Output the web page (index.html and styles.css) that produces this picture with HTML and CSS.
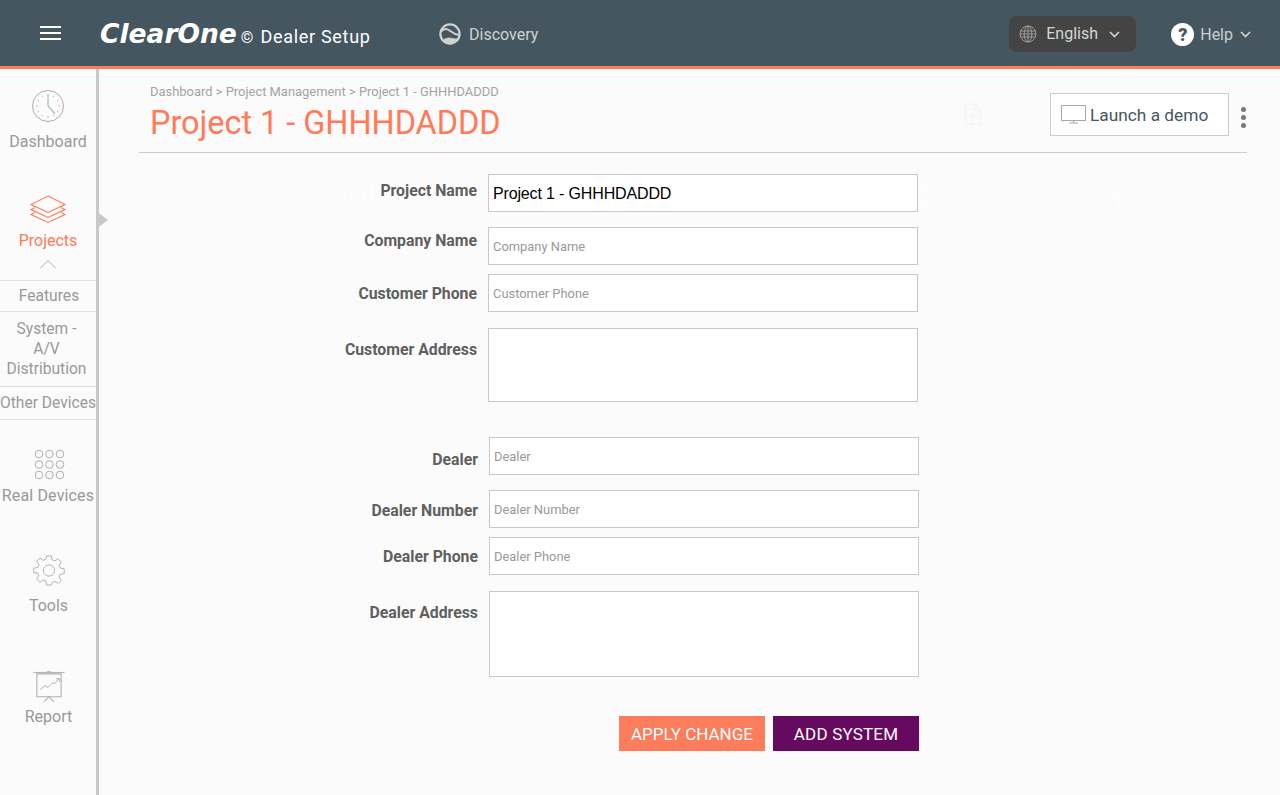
FILE: index.html
```html
<!DOCTYPE html>
<html lang="en">
<head>
<meta charset="utf-8">
<title>ClearOne Dealer Setup</title>
<link rel="stylesheet" href="styles.css">
</head>
<body>
<header class="topbar">
  <button class="burger" aria-label="Menu"><span></span><span></span><span></span></button>
  <div class="brand">
    <span class="brand-logo">ClearOne</span><span class="brand-copy">©</span><span class="brand-name">Dealer Setup</span>
  </div>
  <div class="discovery">
    <svg width="24" height="24" viewBox="0 0 24 24" fill="none" stroke="#cfd2d3" stroke-width="2.2"><circle cx="12" cy="12" r="9.600"/><path d="M2.500 10c3-3.500 6.500-3.500 9-1.500s5 4 10 4.500" stroke-width="1.800"/><path d="M4.500 19c2.500-2.500 5-3.200 8-2.800s5 1.200 7 .8l-2 3-5 2-5-.8z" fill="#cfd2d3" stroke-width="1"/></svg>
    <span>Discovery</span>
  </div>
  <div class="spacer"></div>
  <div class="lang">
    <svg width="18" height="18" viewBox="0 0 18 18" fill="none" stroke="#9a9a9a" stroke-width="1"><circle cx="9" cy="9" r="8"/><ellipse cx="9" cy="9" rx="3.800" ry="8"/><path d="M9 1v16M1.500 6h15M1.500 12h15M1 9h16"/></svg>
    <span>English</span>
    <svg class="chev" width="11" height="7" viewBox="0 0 11 7" fill="none" stroke="#d5d5d5" stroke-width="1.600"><path d="M1 1l4.500 4.500L10 1"/></svg>
  </div>
  <div class="help">
    <span class="help-mark">?</span>
    <span class="help-text">Help</span>
    <svg width="11" height="7" viewBox="0 0 11 7" fill="none" stroke="#d5d5d5" stroke-width="1.600"><path d="M1 1l4.500 4.500L10 1"/></svg>
  </div>
</header>
<div class="page">
  <nav class="side">
    <a class="nav nav-dash">
      <svg width="34" height="34" viewBox="0 0 34 34" fill="none" stroke="#aeaeae"><circle cx="17" cy="17" r="15.500"/><path d="M17 5v12l7 8" stroke="#a9bccb" stroke-width="1.200"/><path d="M17 29v-2M5 17h2M29 17h-2M11 6.600l.8 1.400M23 6.600l-.8 1.400M6.600 11l1.400.8M27.400 11l-1.400.8M6.600 23l1.400-.8M27.400 23l-1.400-.8M11 27.400l.8-1.400M23 27.400l-.8-1.400" stroke="#bbb"/></svg>
      <span>Dashboard</span>
    </a>
    <a class="nav nav-projects">
      <svg width="36" height="29" viewBox="0 0 36 29" fill="none" stroke="#ff7a59" stroke-width="1.100"><path d="M18 1L35 9.500 18 17.500 1 9.500z"/><path d="M5 12.500L1 14.500l17 8 17-8-4-2"/><path d="M5 17.500L1 19.500l17 8 17-8-4-2"/></svg>
      <span>Projects</span>
      <svg class="caret" width="18" height="10" viewBox="0 0 18 10" fill="none" stroke="#a9b4b8"><path d="M1 9.500L9 1.500l8 8"/></svg>
    </a>
    <ul class="sub">
      <li class="sub-features">Features</li>
      <li class="sub-system">System -<br>A/V<br>Distribution</li>
      <li class="sub-other">Other Devices</li>
    </ul>
    <a class="nav nav-real">
      <svg class="real-icon" width="31" height="31" viewBox="0 0 31 31" fill="none" stroke="#aeaeae"><circle cx="5" cy="5" r="3.800"/><circle cx="15.500" cy="5" r="3.800"/><circle cx="26" cy="5" r="3.800"/><circle cx="5" cy="15.500" r="3.800"/><circle cx="15.500" cy="15.500" r="3.800"/><circle cx="26" cy="15.500" r="3.800"/><circle cx="5" cy="26" r="3.800"/><circle cx="15.500" cy="26" r="3.800"/><circle cx="26" cy="26" r="3.800"/></svg>
      <span>Real Devices</span>
    </a>
    <a class="nav nav-tools">
      <svg width="32" height="31" viewBox="0 0 33 33" fill="none" stroke="#aeaeae"><circle cx="16.500" cy="16.500" r="6"/><path d="M14 1h5l.8 4.200 2.900 1.200 3.500-2.400 3.500 3.500-2.400 3.500 1.200 2.900 4.200.8v5l-4.200.8-1.200 2.900 2.400 3.500-3.500 3.500-3.500-2.400-2.900 1.200L19 32h-5l-.8-4.200-2.900-1.200-3.500 2.400-3.500-3.500 2.400-3.500-1.200-2.900L.300 19v-5l4.200-.8 1.200-2.900-2.400-3.500 3.500-3.500 3.500 2.400 2.900-1.200z"/></svg>
      <span>Tools</span>
    </a>
    <a class="nav nav-report">
      <svg width="32" height="31" viewBox="0 0 32 32" fill="none" stroke="#aeaeae"><path d="M0 1.500h32M13.500 1c.5-1 4.500-1 5 0"/><path d="M3.500 3h25v23.500h-25z" stroke-width="1.100"/><path d="M7 19l5-4 3 2 5-5 2 1 4-5M23.500 8H27v3.500" stroke-width="1"/><path d="M11 31.500l5-5 5 5" stroke-width="1.100"/></svg>
      <span>Report</span>
    </a>
    <span class="side-arrow"></span>
  </nav>
  <main class="main">
    <div class="head">
      <div class="head-text">
        <div class="crumbs">Dashboard &gt; Project Management &gt; Project 1 - GHHHDADDD</div>
        <h1 class="title">Project 1 - GHHHDADDD</h1>
      </div>
      <svg class="ghost ghost-upload" width="18" height="24" viewBox="0 0 18 24" fill="none" stroke="#f3f3f3"><path d="M1 1h10l6 6v14H1zM11 1v6h6M9 23V10M5 14l4-4 4 4"/></svg>
      <button class="demo">
        <svg width="25" height="19" viewBox="0 0 25 19" fill="none" stroke="#a8a8a8"><rect x=".5" y=".5" width="24" height="15"/><path d="M8 18h9M12.500 16v2"/></svg>
        <span>Launch a demo</span>
      </button>
      <span class="dots"><i></i><i></i><i></i></span>
    </div>
    <form class="form">
      <svg class="ghost ghost-map" width="30" height="24" viewBox="0 0 30 24" fill="none" stroke="#fff"><path d="M1 6l8-4 12 2 8-3v18l-8 3-12-3-8 3zM9 2v17M21 4v19"/></svg>
      <svg class="ghost ghost-doc" width="10" height="26" viewBox="0 0 10 26" fill="none" stroke="#fff"><path d="M0 1h9v24H0M2 8h5M2 13h5M2 18h5"/></svg>
      <svg class="ghost ghost-lock" width="20" height="24" viewBox="0 0 20 24" fill="none" stroke="#fff"><rect x="1" y="10" width="18" height="13"/><path d="M4 10V6c0-6 12-6 12 0v4M10 14v4"/></svg>
      <div class="group">
        <div class="row row-name">
          <label class="lbl lbl-a">Project Name</label>
          <input class="field field-value" value="Project 1 - GHHHDADDD">
        </div>
        <div class="row row-company">
          <label class="lbl lbl-b">Company Name</label>
          <input class="field" placeholder="Company Name">
        </div>
        <div class="row row-phone">
          <label class="lbl lbl-c">Customer Phone</label>
          <input class="field" placeholder="Customer Phone">
        </div>
        <div class="row row-addr">
          <label class="lbl lbl-d">Customer Address</label>
          <textarea class="field area-a"></textarea>
        </div>
      </div>
      <div class="group group-dealer">
        <div class="row">
          <label class="lbl lbl-e">Dealer</label>
          <input class="field" placeholder="Dealer">
        </div>
        <div class="row row-dnum">
          <label class="lbl lbl-f">Dealer Number</label>
          <input class="field" placeholder="Dealer Number">
        </div>
        <div class="row row-dphone">
          <label class="lbl lbl-c">Dealer Phone</label>
          <input class="field" placeholder="Dealer Phone">
        </div>
        <div class="row row-daddr">
          <label class="lbl lbl-d">Dealer Address</label>
          <textarea class="field area-b"></textarea>
        </div>
        <div class="actions">
          <button type="button" class="btn btn-apply">APPLY CHANGE</button>
          <button type="button" class="btn btn-add">ADD SYSTEM</button>
        </div>
      </div>
    </form>
  </main>
</div>
</body>
</html>
```
FILE: styles.css
```css
* { box-sizing: border-box; }
html, body { margin: 0; height: 795px; overflow: hidden; }
body { font-family: Roboto, "Liberation Sans", sans-serif; background: #fbfbfb; color: #555; }

.topbar { height: 69px; background: #465661; border-bottom: 3px solid #ff7a59; display: flex; align-items: center; }
.burger { width: 21px; height: 14px; margin-left: 40px; padding: 0; border: 0; background: none; display: flex; flex-direction: column; justify-content: space-between; }
.burger span { display: block; height: 2px; background: #fff; }
.brand { align-self: flex-start; width: 300px; margin: 2px 0 0 39px; padding-top: 10px; display: flex; align-items: baseline; color: #fff; white-space: nowrap; line-height: 43px; }
.brand-logo { font-family: "DejaVu Sans", sans-serif; font-weight: 700; font-style: italic; font-size: 26.500px; }
.brand-copy { font-size: 16px; margin-left: 4px; }
.brand-name { font-size: 18px; margin-left: 7px; letter-spacing: .7px; }
.discovery { margin: 2px 0 0 38px; display: flex; align-items: center; gap: 7px; color: #cfd2d3; font-size: 16px; }
.spacer { flex: 1; }
.lang { width: 127px; height: 36px; background: #444; border-radius: 8px; display: flex; align-items: center; padding-left: 10px; color: #d5d5d5; font-size: 16px; margin-top: 2px; }
.lang span { margin: -2px 0 0 9px; }
.lang .chev { margin-left: 11px; }
.help { margin: 2px 29px 0 35px; display: flex; align-items: center; color: #c9cdd0; font-size: 16px; }
.help-mark { width: 23px; height: 23px; border-radius: 50%; background: #fff; color: #465661; font-weight: 900; font-size: 18px; line-height: 23px; text-align: center; margin-right: 6px; }
.help-text { margin-right: 7px; }

.page { display: flex; height: 726px; }
.side { position: relative; width: 99px; flex: none; border-right: 3px solid #c8c8c8; display: flex; flex-direction: column; color: #999; font-size: 16px; }
.nav { display: flex; flex-direction: column; align-items: center; white-space: nowrap; }
.nav-dash { padding-top: 20px; gap: 9px; }
.nav-projects { padding-top: 44px; color: #ff7a59; }
.nav-projects span { margin-top: 7px; }
.caret { margin-top: 9px; margin-bottom: 11px; }
.sub { list-style: none; margin: 0; padding: 0; font-size: 15.600px; text-align: center; line-height: 20px; color: #999; }
.sub li { border-top: 1px solid #dedede; white-space: nowrap; }
.sub-features { padding: 5px 0 5px 2px; }
.sub-system { padding: 7px 3px 7px 0; }
.sub-other { padding: 6px 0; border-bottom: 1px solid #dedede; }
.nav-real { padding-top: 29px; gap: 6px; letter-spacing: .15px; }
.real-icon { margin-left: 3px; }
.nav-tools { padding: 50px 0 0 1px; gap: 10px; }
.nav-report { padding: 56px 0 0 1px; gap: 5px; }
.side-arrow { position: absolute; left: 96px; top: 142px; border-left: 12px solid #c8c8c8; border-top: 9px solid transparent; border-bottom: 9px solid transparent; }

.main { flex: 1; position: relative; min-width: 0; }
.head { margin: 0 33px 0 40px; height: 84px; border-bottom: 1px solid #ccc; display: flex; padding-left: 11px; position: relative; }
.head-text { flex: 1; }
.crumbs { font-size: 12.930px; color: #a3a3a3; padding-top: 15px; line-height: 15px; white-space: nowrap; }
.title { margin: 4px 0 0; font-size: 32.400px; font-weight: 400; color: #ff7a59; line-height: 40px; white-space: nowrap; }
.demo { width: 179px; height: 43px; margin-top: 24px; background: #fff; border: 1px solid #ccc; display: flex; align-items: center; padding: 0 0 0 10px; gap: 4px; font-family: inherit; font-size: 17.300px; color: #465661; white-space: nowrap; }
.dots { width: 18px; margin-top: 38px; padding-right: 1px; display: flex; flex-direction: column; align-items: flex-end; gap: 3px; }
.dots i { display: block; width: 5px; height: 5px; border-radius: 50%; background: #777; }
.ghost { position: absolute; }
.ghost-upload { left: 825px; top: 34px; }
.ghost-map { left: 244px; top: 29px; }
.ghost-doc { left: 819px; top: 30px; }
.ghost-lock { left: 1001px; top: 32px; }

.form { position: relative; padding-top: 21px; }
.group { display: flex; flex-direction: column; }
.group-dealer { margin-top: 35px; margin-left: 1px; }
.row { display: flex; }
.row-company { margin-top: 15px; }
.row-phone { margin-top: 9px; }
.row-addr { margin-top: 16px; }
.row-dnum { margin-top: 15px; }
.row-dphone { margin-top: 9px; }
.row-daddr { margin-top: 16px; }
.lbl { width: 378px; flex: none; text-align: right; font-size: 15.800px; font-weight: 700; color: #5f5f5f; line-height: 20px; white-space: nowrap; }
.lbl-a { padding-top: 7px; }
.lbl-b { padding-top: 4px; }
.lbl-c { padding-top: 10px; }
.lbl-d { padding-top: 12px; }
.lbl-e { padding-top: 13px; }
.lbl-f { padding-top: 11px; }
.field { display: block; width: 430px; height: 38px; margin: 0 0 0 11px; padding: 0 4px; background: #fff; border: 1px solid #c8c8c8; border-radius: 0; font-family: inherit; font-size: 12.900px; color: #000; outline: 0; resize: none; }
.field::placeholder { color: #999; opacity: 1; }
.field-value { font-family: "Liberation Sans", sans-serif; font-size: 16px; letter-spacing: -.15px; padding-top: 2px; }
.area-a { height: 74px; }
.area-b { height: 86px; }
.actions { display: flex; justify-content: flex-end; gap: 8px; width: 819px; margin-top: 39px; }
.btn { width: 146px; height: 35px; border: 0; padding: 0; font-family: inherit; font-size: 17px; color: #fff; }
.btn-apply { background: #fb7d5b; }
.btn-add { background: #660a60; letter-spacing: .2px; }
```
